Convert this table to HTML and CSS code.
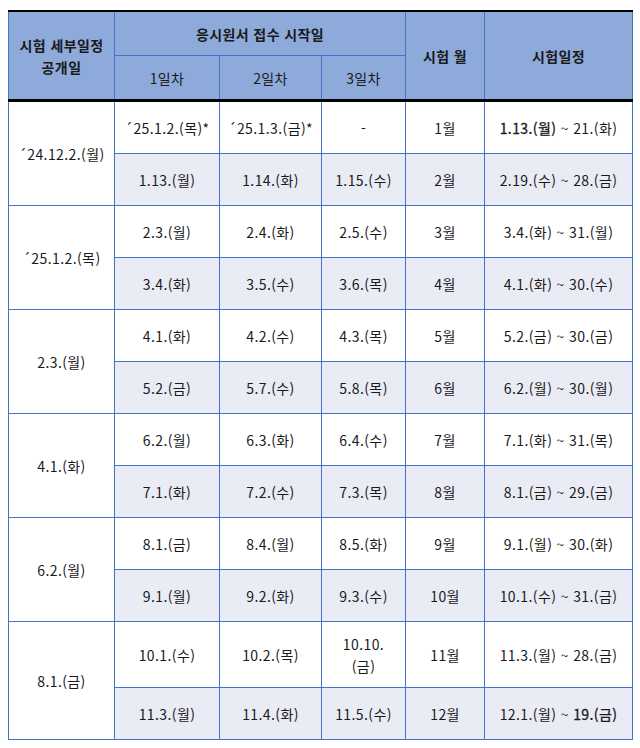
FILE: index.html
```html
<!DOCTYPE html>
<html lang="ko">
<head>
<meta charset="utf-8">
<link rel="stylesheet" href="styles.css">
</head>
<body>
<table class="sched">
  <colgroup>
    <col class="c1"><col class="c2"><col class="c3"><col class="c4"><col class="c5"><col class="c6">
  </colgroup>
  <thead>
    <tr class="h1">
      <th rowspan="2" class="strong">시험 세부일정<br>공개일</th>
      <th colspan="3" class="strong">응시원서 접수 시작일</th>
      <th rowspan="2" class="strong">시험 월</th>
      <th rowspan="2" class="strong">시험일정</th>
    </tr>
    <tr class="h2">
      <th>1일차</th><th>2일차</th><th>3일차</th>
    </tr>
  </thead>
  <tbody>
    <tr><td rowspan="2" class="open">´24.12.2.(월)</td><td>´25.1.2.(목)*</td><td>´25.1.3.(금)*</td><td>-</td><td>1월</td><td><b>1.13.(월)</b> ~ 21.(화)</td></tr>
    <tr class="alt"><td>1.13.(월)</td><td>1.14.(화)</td><td>1.15.(수)</td><td>2월</td><td>2.19.(수) ~ 28.(금)</td></tr>
    <tr><td rowspan="2" class="open">´25.1.2.(목)</td><td>2.3.(월)</td><td>2.4.(화)</td><td>2.5.(수)</td><td>3월</td><td>3.4.(화) ~ 31.(월)</td></tr>
    <tr class="alt"><td>3.4.(화)</td><td>3.5.(수)</td><td>3.6.(목)</td><td>4월</td><td>4.1.(화) ~ 30.(수)</td></tr>
    <tr><td rowspan="2" class="open">2.3.(월)</td><td>4.1.(화)</td><td>4.2.(수)</td><td>4.3.(목)</td><td>5월</td><td>5.2.(금) ~ 30.(금)</td></tr>
    <tr class="alt"><td>5.2.(금)</td><td>5.7.(수)</td><td>5.8.(목)</td><td>6월</td><td>6.2.(월) ~ 30.(월)</td></tr>
    <tr><td rowspan="2" class="open">4.1.(화)</td><td>6.2.(월)</td><td>6.3.(화)</td><td>6.4.(수)</td><td>7월</td><td>7.1.(화) ~ 31.(목)</td></tr>
    <tr class="alt"><td>7.1.(화)</td><td>7.2.(수)</td><td>7.3.(목)</td><td>8월</td><td>8.1.(금) ~ 29.(금)</td></tr>
    <tr><td rowspan="2" class="open">6.2.(월)</td><td>8.1.(금)</td><td>8.4.(월)</td><td>8.5.(화)</td><td>9월</td><td>9.1.(월) ~ 30.(화)</td></tr>
    <tr class="alt"><td>9.1.(월)</td><td>9.2.(화)</td><td>9.3.(수)</td><td>10월</td><td>10.1.(수) ~ 31.(금)</td></tr>
    <tr class="tall"><td rowspan="2" class="open">8.1.(금)</td><td>10.1.(수)</td><td>10.2.(목)</td><td>10.10.<br>(금)</td><td>11월</td><td>11.3.(월) ~ 28.(금)</td></tr>
    <tr class="alt"><td>11.3.(월)</td><td>11.4.(화)</td><td>11.5.(수)</td><td>12월</td><td>12.1.(월) ~ <b>19.(금)</b></td></tr>
  </tbody>
</table>
</body>
</html>
```

FILE: styles.css
```css
html, body {
  margin: 0;
  padding: 0;
  background: #ffffff;
}
body {
  padding: 10px 8px 0 8px;
  font-family: "Noto Sans CJK KR", "Noto Sans", sans-serif;
  font-size: 14px;
  letter-spacing: 0.4px;
  color: #1a1a1a;
}
.sched {
  border-collapse: collapse;
  table-layout: fixed;
  width: 624px;
}
.c1 { width: 106px; }
.c2 { width: 105px; }
.c3 { width: 102px; }
.c4 { width: 84px; }
.c5 { width: 79px; }
.c6 { width: 148px; }
.sched th,
.sched td {
  border: 1px solid #4472c4;
  text-align: center;
  vertical-align: middle;
  padding: 0;
  line-height: 22px;
}
.sched th {
  background: #8eaadb;
  font-weight: 400;
  height: 43px;
}
.sched th.strong {
  font-weight: 700;
}
.h1 th {
  border-top: 2px solid #000000;
}
.h2 th,
.h1 th[rowspan] {
  border-bottom: 3px solid #000000;
}
.sched td {
  height: 51px;
  background: #ffffff;
}
.sched tr.alt td {
  background: #e9ebf5;
}
.sched td.open {
  background: #ffffff;
}
.sched tr.tall td {
  height: 65px;
}
.sched b {
  font-weight: 400;
  -webkit-text-stroke: 0.3px #1a1a1a;
}
```
